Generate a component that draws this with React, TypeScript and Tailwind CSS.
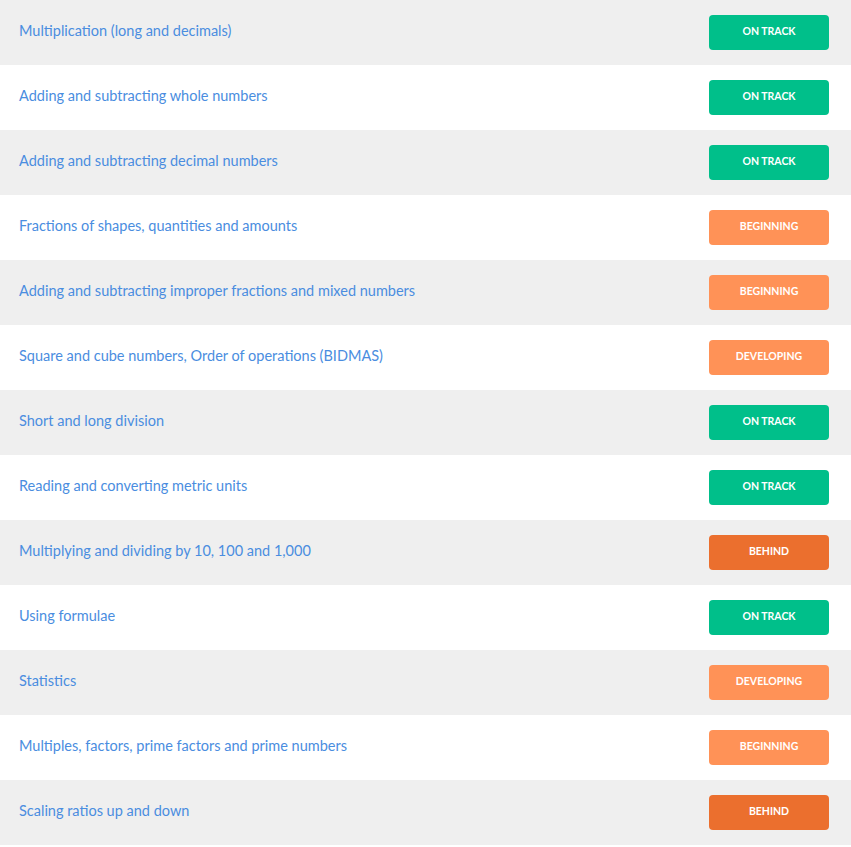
type Status = 'ON TRACK' | 'BEGINNING' | 'DEVELOPING' | 'BEHIND'

const rows: { topic: string; status: Status }[] = [
  { topic: 'Multiplication (long and decimals)', status: 'ON TRACK' },
  { topic: 'Adding and subtracting whole numbers', status: 'ON TRACK' },
  { topic: 'Adding and subtracting decimal numbers', status: 'ON TRACK' },
  { topic: 'Fractions of shapes, quantities and amounts', status: 'BEGINNING' },
  { topic: 'Adding and subtracting improper fractions and mixed numbers', status: 'BEGINNING' },
  { topic: 'Square and cube numbers, Order of operations (BIDMAS)', status: 'DEVELOPING' },
  { topic: 'Short and long division', status: 'ON TRACK' },
  { topic: 'Reading and converting metric units', status: 'ON TRACK' },
  { topic: 'Multiplying and dividing by 10, 100 and 1,000', status: 'BEHIND' },
  { topic: 'Using formulae', status: 'ON TRACK' },
  { topic: 'Statistics', status: 'DEVELOPING' },
  { topic: 'Multiples, factors, prime factors and prime numbers', status: 'BEGINNING' },
  { topic: 'Scaling ratios up and down', status: 'BEHIND' },
]

const badgeColour: Record<Status, string> = {
  'ON TRACK': 'bg-[#00bf8a]',
  BEGINNING: 'bg-[#ff9257]',
  DEVELOPING: 'bg-[#ff9257]',
  BEHIND: 'bg-[#eb6f2e]',
}

export default function App() {
  return (
    <div className="w-[851px] bg-white" style={{ fontFamily: 'Lato, "Open Sans", sans-serif' }}>
      {rows.map((r, i) => (
        <div
          key={r.topic}
          className={`flex h-[65px] items-center justify-between pl-[19px] pr-[22px] ${i % 2 === 0 ? 'bg-[#efefef]' : 'bg-white'}`}
        >
          <span className="-mt-[3px] text-[14.5px] text-[#4a8de0]">{r.topic}</span>
          <span
            className={`flex h-[35px] w-[120px] items-center justify-center rounded-[4px] pb-[1px] text-[10.5px] font-bold text-white ${badgeColour[r.status]}`}
          >
            {r.status}
          </span>
        </div>
      ))}
    </div>
  )
}
